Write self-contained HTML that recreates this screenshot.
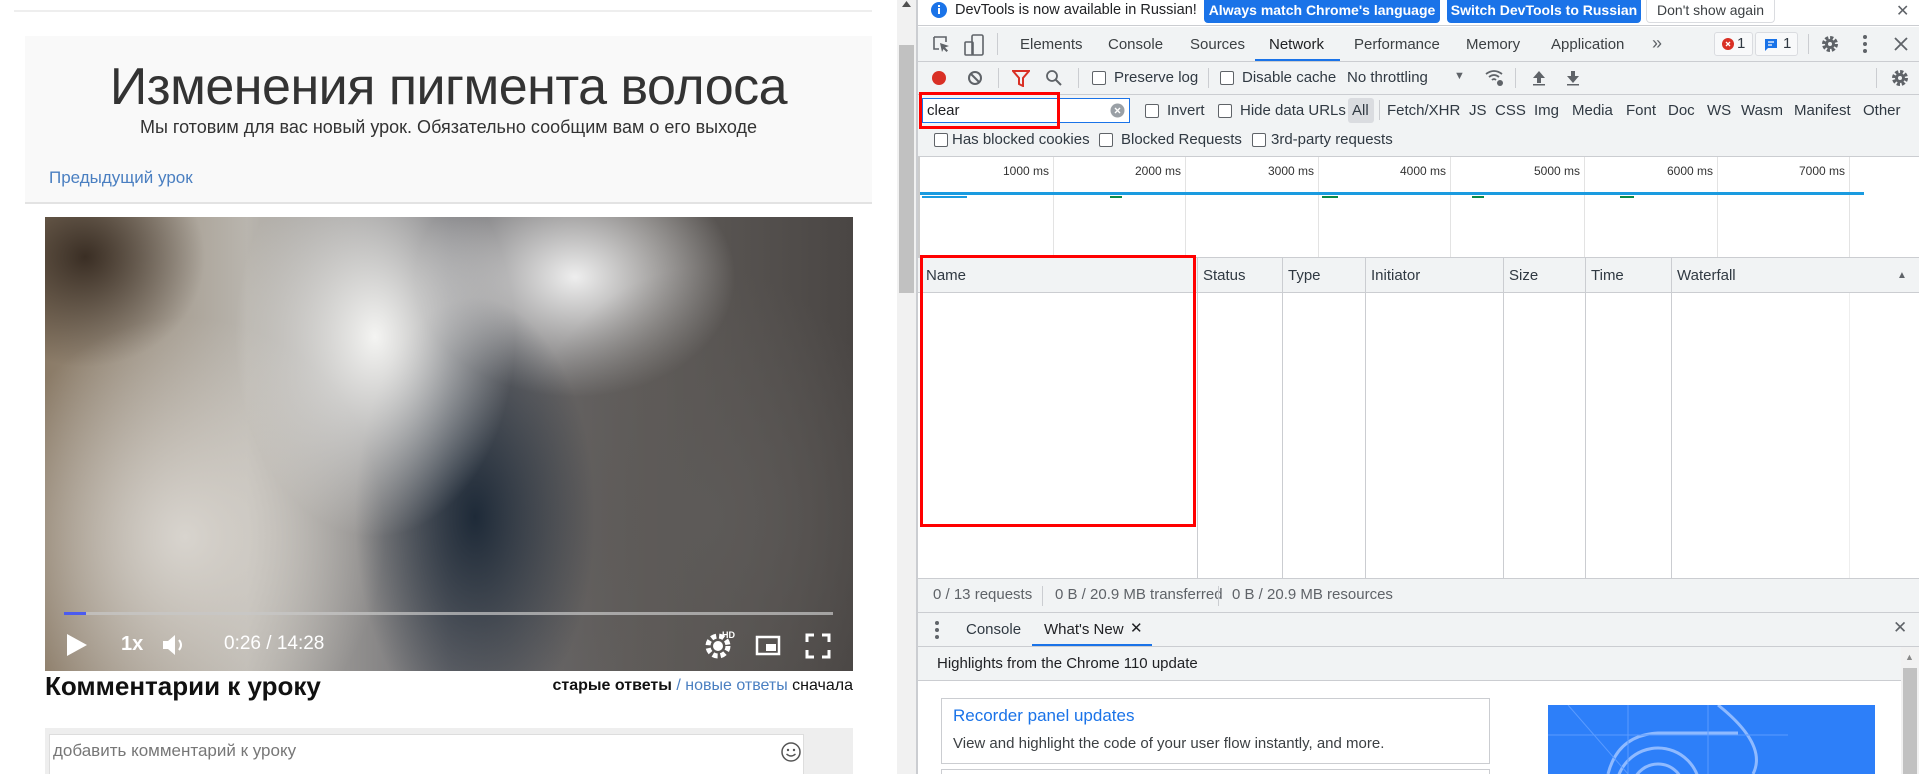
<!DOCTYPE html>
<html><head><meta charset="utf-8"><style>
*{box-sizing:border-box;margin:0;padding:0}
html,body{overflow:hidden}
body{width:1919px;height:774px;position:relative;background:#fff;font-family:"Liberation Sans",sans-serif;}
.a{position:absolute;white-space:nowrap}
.dt{font-size:14px;color:#303942}
.cb{position:absolute;width:14px;height:14px;border:1px solid #5f6368;border-radius:2px;background:#fff}
.vl{position:absolute;width:1px;background:#cbcdd1}
</style></head><body>
<!-- LEFT PAGE -->
<div class="a" style="left:14px;top:10px;width:858px;height:2px;background:#eee"></div>
<div class="a" style="left:25px;top:36px;width:847px;height:168px;background:#f9f9f9;border-bottom:2px solid #e3e3e3"></div>
<div class="a" style="left:25px;top:57px;width:847px;text-align:center;font-size:52px;color:#333;letter-spacing:-0.5px">Изменения пигмента волоса</div>
<div class="a" style="left:25px;top:117px;width:847px;text-align:center;font-size:18px;color:#333">Мы готовим для вас новый урок. Обязательно сообщим вам о его выходе</div>
<div class="a" style="left:49px;top:168px;font-size:17px;color:#4a7fc1">Предыдущий урок</div>
<div class="a" style="left:45px;top:217px;width:808px;height:454px;overflow:hidden;background:
radial-gradient(ellipse 140px 200px at 330px 120px,#f4f4f2 0%,rgba(240,240,240,0) 100%),
radial-gradient(ellipse 120px 220px at 430px 300px,#1e2a38 0%,rgba(30,40,55,0) 100%),
radial-gradient(ellipse 200px 250px at 660px 300px,#5d5a58 0%,rgba(90,88,85,0) 100%),
radial-gradient(ellipse 200px 220px at 140px 320px,#d8d4ce 0%,rgba(210,205,200,0) 100%),
radial-gradient(ellipse 160px 120px at 530px 60px,#eeeeee 0%,rgba(230,230,230,0) 100%),
radial-gradient(ellipse 120px 110px at 40px 40px,#3a2e24 0%,rgba(60,45,35,0) 100%),
linear-gradient(90deg,#8a7a66 0%,#b9b5ae 25%,#6e6e72 50%,#5f5b58 75%,#4a4644 100%)">
<div class="a" style="left:19px;top:395px;width:769px;height:3px;background:rgba(200,200,200,.7)"></div>
<div class="a" style="left:19px;top:395px;width:22px;height:3px;background:#4b5bf0"></div>
<svg class="a" style="left:20px;top:415px" width="24" height="26"><path d="M2 2 L22 13 L2 24Z" fill="#fff"/></svg>
<div class="a" style="left:76px;top:416px;font-size:20px;font-weight:bold;color:#fff">1x</div>
<svg class="a" style="left:116px;top:416px" width="28" height="24"><path d="M2 8h5l7-6v20l-7-6H2z" fill="#fff"/><path d="M18 7q4 5 0 10" stroke="#fff" stroke-width="2" fill="none"/></svg>
<div class="a" style="left:179px;top:416px;font-size:19px;color:#fff">0:26 / 14:28</div>
<svg class="a" style="left:659px;top:412px" width="34" height="30"><circle cx="14" cy="17" r="10" fill="none" stroke="#fff" stroke-width="5" stroke-dasharray="5 3"/><circle cx="14" cy="17" r="5" fill="#fff"/><text x="18" y="9" font-size="9" font-weight="bold" fill="#fff" font-family="Liberation Sans">HD</text></svg>
<svg class="a" style="left:710px;top:418px" width="26" height="22"><rect x="2" y="2" width="22" height="17" fill="none" stroke="#fff" stroke-width="2.5"/><rect x="11" y="9" width="10" height="7" fill="#fff"/></svg>
<svg class="a" style="left:760px;top:416px" width="26" height="26"><path d="M2 9V2h7M17 2h7v7M24 17v7h-7M9 24H2v-7" stroke="#fff" stroke-width="3" fill="none"/></svg>
</div>
<div class="a" style="left:45px;top:671px;font-size:26px;font-weight:bold;color:#111">Комментарии к уроку</div>
<div class="a" style="left:453px;top:677px;width:400px;text-align:right;font-size:16px;color:#111"><b>старые ответы</b> <span style="color:#4a7fc1">/ новые ответы</span> сначала</div>
<div class="a" style="left:45px;top:728px;width:808px;height:46px;background:#eee"></div>
<div class="a" style="left:49px;top:734px;width:755px;height:40px;background:#fff;border:1px solid #ddd;border-bottom:none"></div>
<div class="a" style="left:53px;top:741px;font-size:17px;color:#777">добавить комментарий к уроку</div>
<svg class="a" style="left:780px;top:741px" width="22" height="22"><circle cx="11" cy="11" r="9" fill="none" stroke="#555" stroke-width="1.5"/><circle cx="8" cy="9" r="1.2" fill="#555"/><circle cx="14" cy="9" r="1.2" fill="#555"/><path d="M6.5 13q4.5 4 9 0" stroke="#555" stroke-width="1.5" fill="none"/></svg>
<!-- scrollbar -->
<div class="a" style="left:897px;top:0;width:19px;height:774px;background:#f1f1f1"></div>
<div class="a" style="left:899px;top:45px;width:15px;height:248px;background:#c1c1c1"></div>
<svg class="a" style="left:901px;top:0" width="11" height="8"><path d="M1 7L5.5 1 10 7Z" fill="#505050"/></svg>
<div class="a" style="left:916px;top:0;width:2px;height:774px;background:#cbcdd1"></div>

<!-- DEVTOOLS -->
<div class="a dt" style="left:918px;top:0;width:1001px;height:774px;background:#fff"></div>
<div class="a" style="left:918px;top:0;width:1001px;height:26px;background:#fff;border-bottom:1px solid #cbcdd1"></div>
<svg class="a" style="left:930px;top:1px" width="18" height="18"><circle cx="9" cy="9" r="8" fill="#1a73e8"/><rect x="8" y="7" width="2" height="6" fill="#fff"/><rect x="8" y="4" width="2" height="2" fill="#fff"/></svg>
<div class="a dt" style="left:955px;top:2px;font-size:14.5px;color:#202124">DevTools is now available in Russian!</div>
<div class="a" style="left:1204px;top:0;width:236px;height:23px;background:#1a73e8;border-radius:0 0 4px 4px;color:#fff;font-weight:bold;font-size:14px;text-align:center;line-height:20px">Always match Chrome's language</div>
<div class="a" style="left:1447px;top:0;width:194px;height:23px;background:#1a73e8;border-radius:0 0 4px 4px;color:#fff;font-weight:bold;font-size:14px;text-align:center;line-height:20px">Switch DevTools to Russian</div>
<div class="a" style="left:1646px;top:0;width:129px;height:23px;border:1px solid #dadce0;border-top:none;border-radius:0 0 4px 4px;color:#3c4043;font-size:14px;text-align:center;line-height:20px">Don't show again</div>
<div class="a" style="left:1896px;top:1px;font-size:16px;color:#5f6368">✕</div>
<div class="a" style="left:918px;top:27px;width:1001px;height:35px;background:#f1f3f4;border-bottom:1px solid #cbcdd1"></div>
<svg class="a" style="left:932px;top:35px" width="20" height="20"><path d="M2 2h12v5M2 2v12h5" stroke="#5f6368" stroke-width="1.6" fill="none"/><path d="M8 8l9 3-4 1.5 3 3-1.5 1.5-3-3L10 17z" fill="#5f6368"/></svg>
<svg class="a" style="left:963px;top:33px" width="22" height="24"><rect x="9" y="2" width="11" height="20" rx="1.5" fill="none" stroke="#5f6368" stroke-width="1.6"/><rect x="2" y="9" width="8" height="13" rx="1" fill="none" stroke="#5f6368" stroke-width="1.6"/></svg>
<div class="vl" style="left:997px;top:33px;height:22px"></div>
<div class="a dt" style="left:1020px;top:36px;font-size:15px;color:#3c4043">Elements</div>
<div class="a dt" style="left:1108px;top:36px;font-size:15px;color:#3c4043">Console</div>
<div class="a dt" style="left:1190px;top:36px;font-size:15px;color:#3c4043">Sources</div>
<div class="a dt" style="left:1269px;top:36px;font-size:15px;color:#202124">Network</div>
<div class="a" style="left:1255px;top:59px;width:85px;height:2px;background:#1a73e8"></div>
<div class="a dt" style="left:1354px;top:36px;font-size:15px;color:#3c4043">Performance</div>
<div class="a dt" style="left:1466px;top:36px;font-size:15px;color:#3c4043">Memory</div>
<div class="a dt" style="left:1551px;top:36px;font-size:15px;color:#3c4043">Application</div>
<div class="a dt" style="left:1652px;top:33px;font-size:18px;color:#5f6368">»</div>
<div class="a" style="left:1714px;top:32px;width:39px;height:24px;border:1px solid #dadce0;border-radius:3px;background:#f8f9fa"></div>
<svg class="a" style="left:1722px;top:38px" width="12" height="12"><circle cx="6" cy="6" r="6" fill="#d93025"/><path d="M4 4l4 4M8 4l-4 4" stroke="#fff" stroke-width="1.3"/></svg>
<div class="a dt" style="left:1737px;top:35px;font-size:15px">1</div>
<div class="a" style="left:1755px;top:32px;width:43px;height:24px;border:1px solid #dadce0;border-radius:3px;background:#f8f9fa"></div>
<svg class="a" style="left:1764px;top:38px" width="14" height="14"><path d="M1 1h12v9H4l-3 3z" fill="#1a73e8"/><path d="M4 4h6M4 7h4" stroke="#fff" stroke-width="1.2"/></svg>
<div class="a dt" style="left:1783px;top:35px;font-size:15px">1</div>
<div class="vl" style="left:1808px;top:34px;height:20px"></div>
<svg class="a" style="left:1821px;top:35px" width="18" height="18"><circle cx="9" cy="9" r="6" fill="none" stroke="#5f6368" stroke-width="4" stroke-dasharray="3 1.7"/><circle cx="9" cy="9" r="5" fill="#5f6368"/><circle cx="9" cy="9" r="2" fill="#f1f3f4"/></svg>
<svg class="a" style="left:1862px;top:34px" width="6" height="20"><circle cx="3" cy="3" r="2" fill="#5f6368"/><circle cx="3" cy="10" r="2" fill="#5f6368"/><circle cx="3" cy="17" r="2" fill="#5f6368"/></svg>
<svg class="a" style="left:1894px;top:37px" width="14" height="14"><path d="M1 1l12 12M13 1L1 13" stroke="#5f6368" stroke-width="1.8"/></svg>
<div class="a" style="left:918px;top:62px;width:1001px;height:33px;background:#f1f3f4;border-bottom:1px solid #cbcdd1"></div>
<svg class="a" style="left:931px;top:70px" width="16" height="16"><circle cx="8" cy="8" r="7" fill="#d93025"/></svg>
<svg class="a" style="left:967px;top:70px" width="16" height="16"><circle cx="8" cy="8" r="6" fill="none" stroke="#5f6368" stroke-width="2"/><path d="M4 4l8 8" stroke="#5f6368" stroke-width="2"/></svg>
<div class="vl" style="left:998px;top:68px;height:20px"></div>
<svg class="a" style="left:1012px;top:70px" width="18" height="17"><path d="M1 1h16l-6 7v8l-4-2V8z" fill="none" stroke="#d93025" stroke-width="2"/></svg>
<svg class="a" style="left:1045px;top:69px" width="18" height="18"><circle cx="7" cy="7" r="5" fill="none" stroke="#5f6368" stroke-width="1.8"/><path d="M11 11l5 5" stroke="#5f6368" stroke-width="2"/></svg>
<div class="vl" style="left:1078px;top:68px;height:20px"></div>
<div class="cb" style="left:1092px;top:71px"></div>
<div class="a dt" style="left:1114px;top:69px;font-size:15px">Preserve log</div>
<div class="vl" style="left:1208px;top:68px;height:20px"></div>
<div class="cb" style="left:1220px;top:71px"></div>
<div class="a dt" style="left:1242px;top:69px;font-size:15px">Disable cache</div>
<div class="a dt" style="left:1347px;top:69px;font-size:15px">No throttling</div>
<div class="a dt" style="left:1454px;top:70px;font-size:11px;color:#5f6368">▼</div>
<svg class="a" style="left:1484px;top:68px" width="22" height="20"><path d="M2 6q8-6 16 0M5 9q5-4 10 0M8 12q2-2 4 0" stroke="#5f6368" stroke-width="1.8" fill="none"/><circle cx="16" cy="15" r="3" fill="#5f6368"/></svg>
<div class="vl" style="left:1515px;top:68px;height:20px"></div>
<svg class="a" style="left:1531px;top:69px" width="16" height="18"><path d="M8 2L2 9h4v5h4V9h4z" fill="#5f6368"/><rect x="2" y="15" width="12" height="1.5" fill="#5f6368"/></svg>
<svg class="a" style="left:1565px;top:69px" width="16" height="18"><path d="M8 14L2 7h4V2h4v5h4z" fill="#5f6368"/><rect x="2" y="15" width="12" height="1.5" fill="#5f6368"/></svg>
<div class="vl" style="left:1876px;top:68px;height:20px"></div>
<svg class="a" style="left:1891px;top:69px" width="18" height="18"><circle cx="9" cy="9" r="6" fill="none" stroke="#5f6368" stroke-width="4" stroke-dasharray="3 1.7"/><circle cx="9" cy="9" r="5" fill="#5f6368"/><circle cx="9" cy="9" r="2" fill="#f1f3f4"/></svg>
<div class="a" style="left:918px;top:95px;width:1001px;height:62px;background:#f1f3f4;border-bottom:1px solid #cbcdd1"></div>
<div class="a" style="left:922px;top:98px;width:208px;height:25px;background:#fff;border:1px solid #1a73e8"></div>
<div class="a dt" style="left:927px;top:102px;font-size:15px;color:#202124">clear</div>
<svg class="a" style="left:1110px;top:103px" width="15" height="15"><circle cx="7.5" cy="7.5" r="7" fill="#9aa0a6"/><path d="M5 5l5 5M10 5l-5 5" stroke="#fff" stroke-width="1.4"/></svg>
<div class="a" style="left:919px;top:92px;width:141px;height:37px;border:3px solid #f00"></div>
<div class="cb" style="left:1145px;top:104px"></div>
<div class="a dt" style="left:1167px;top:102px;font-size:15px">Invert</div>
<div class="cb" style="left:1218px;top:104px"></div>
<div class="a dt" style="left:1240px;top:102px;font-size:15px">Hide data URLs</div>
<div class="a" style="left:1348px;top:98px;width:26px;height:25px;background:#dadce0;border-radius:3px"></div>
<div class="a dt" style="left:1352px;top:102px;font-size:15px">All</div>
<div class="vl" style="left:1379px;top:100px;height:20px"></div>
<div class="a dt" style="left:1387px;top:102px;font-size:15px">Fetch/XHR</div>
<div class="a dt" style="left:1469px;top:102px;font-size:15px">JS</div>
<div class="a dt" style="left:1495px;top:102px;font-size:15px">CSS</div>
<div class="a dt" style="left:1534px;top:102px;font-size:15px">Img</div>
<div class="a dt" style="left:1572px;top:102px;font-size:15px">Media</div>
<div class="a dt" style="left:1626px;top:102px;font-size:15px">Font</div>
<div class="a dt" style="left:1668px;top:102px;font-size:15px">Doc</div>
<div class="a dt" style="left:1707px;top:102px;font-size:15px">WS</div>
<div class="a dt" style="left:1741px;top:102px;font-size:15px">Wasm</div>
<div class="a dt" style="left:1794px;top:102px;font-size:15px">Manifest</div>
<div class="a dt" style="left:1863px;top:102px;font-size:15px">Other</div>
<div class="cb" style="left:934px;top:133px"></div>
<div class="a dt" style="left:952px;top:131px;font-size:15px">Has blocked cookies</div>
<div class="cb" style="left:1099px;top:133px"></div>
<div class="a dt" style="left:1121px;top:131px;font-size:15px">Blocked Requests</div>
<div class="cb" style="left:1252px;top:133px"></div>
<div class="a dt" style="left:1271px;top:131px;font-size:15px">3rd-party requests</div>
<div class="a" style="left:918px;top:157px;width:2px;height:100px;background:#ccc"></div>
<div class="vl" style="left:1053px;top:157px;height:100px;background:#e3e3e3"></div>
<div class="vl" style="left:1185px;top:157px;height:100px;background:#e3e3e3"></div>
<div class="vl" style="left:1318px;top:157px;height:100px;background:#e3e3e3"></div>
<div class="vl" style="left:1450px;top:157px;height:100px;background:#e3e3e3"></div>
<div class="vl" style="left:1584px;top:157px;height:100px;background:#e3e3e3"></div>
<div class="vl" style="left:1717px;top:157px;height:100px;background:#e3e3e3"></div>
<div class="vl" style="left:1849px;top:157px;height:100px;background:#e3e3e3"></div>
<div class="a" style="left:966px;top:164px;width:83px;text-align:right;font-size:12px;color:#333">1000 ms</div>
<div class="a" style="left:1098px;top:164px;width:83px;text-align:right;font-size:12px;color:#333">2000 ms</div>
<div class="a" style="left:1231px;top:164px;width:83px;text-align:right;font-size:12px;color:#333">3000 ms</div>
<div class="a" style="left:1363px;top:164px;width:83px;text-align:right;font-size:12px;color:#333">4000 ms</div>
<div class="a" style="left:1497px;top:164px;width:83px;text-align:right;font-size:12px;color:#333">5000 ms</div>
<div class="a" style="left:1630px;top:164px;width:83px;text-align:right;font-size:12px;color:#333">6000 ms</div>
<div class="a" style="left:1762px;top:164px;width:83px;text-align:right;font-size:12px;color:#333">7000 ms</div>
<div class="a" style="left:920px;top:192px;width:944px;height:3px;background:#1a9be0"></div>
<div class="a" style="left:922px;top:196px;width:45px;height:2px;background:#1a9be0"></div>
<div class="a" style="left:1110px;top:196px;width:12px;height:2px;background:#0a8a4a"></div>
<div class="a" style="left:1322px;top:196px;width:16px;height:2px;background:#0a8a4a"></div>
<div class="a" style="left:1472px;top:196px;width:12px;height:2px;background:#0a8a4a"></div>
<div class="a" style="left:1620px;top:196px;width:14px;height:2px;background:#0a8a4a"></div>
<div class="a" style="left:918px;top:257px;width:1001px;height:36px;background:#f1f3f4;border-top:1px solid #cbcdd1;border-bottom:1px solid #cbcdd1"></div>
<div class="vl" style="left:1197px;top:258px;height:320px"></div>
<div class="vl" style="left:1282px;top:258px;height:320px"></div>
<div class="vl" style="left:1365px;top:258px;height:320px"></div>
<div class="vl" style="left:1503px;top:258px;height:320px"></div>
<div class="vl" style="left:1585px;top:258px;height:320px"></div>
<div class="vl" style="left:1671px;top:258px;height:320px"></div>
<div class="vl" style="left:1849px;top:293px;height:285px;background:#eee"></div>
<div class="a dt" style="left:926px;top:267px;font-size:15px">Name</div>
<div class="a dt" style="left:1203px;top:267px;font-size:15px">Status</div>
<div class="a dt" style="left:1288px;top:267px;font-size:15px">Type</div>
<div class="a dt" style="left:1371px;top:267px;font-size:15px">Initiator</div>
<div class="a dt" style="left:1509px;top:267px;font-size:15px">Size</div>
<div class="a dt" style="left:1591px;top:267px;font-size:15px">Time</div>
<div class="a dt" style="left:1677px;top:267px;font-size:15px">Waterfall</div>
<div class="a" style="left:1897px;top:270px;font-size:10px;color:#5f6368">▲</div>
<div class="a" style="left:920px;top:255px;width:276px;height:272px;border:3px solid #f00"></div>
<div class="a" style="left:918px;top:578px;width:1001px;height:35px;background:#f1f3f4;border-top:1px solid #cbcdd1;border-bottom:1px solid #cbcdd1"></div>
<div class="a dt" style="left:933px;top:586px;font-size:15px;color:#5f6368">0 / 13 requests</div>
<div class="vl" style="left:1042px;top:586px;height:20px"></div>
<div class="a dt" style="left:1055px;top:586px;font-size:15px;color:#5f6368">0 B / 20.9 MB transferred</div>
<div class="vl" style="left:1218px;top:586px;height:20px"></div>
<div class="a dt" style="left:1232px;top:586px;font-size:15px;color:#5f6368">0 B / 20.9 MB resources</div>
<div class="a" style="left:918px;top:613px;width:1001px;height:34px;background:#f1f3f4;border-bottom:1px solid #cbcdd1"></div>
<svg class="a" style="left:934px;top:620px" width="6" height="20"><circle cx="3" cy="3" r="2" fill="#5f6368"/><circle cx="3" cy="10" r="2" fill="#5f6368"/><circle cx="3" cy="17" r="2" fill="#5f6368"/></svg>
<div class="a dt" style="left:966px;top:621px;font-size:15px">Console</div>
<div class="a dt" style="left:1044px;top:621px;font-size:15px;color:#202124">What's New</div>
<div class="a" style="left:1130px;top:619px;font-size:15px;color:#202124">✕</div>
<div class="a" style="left:1032px;top:644px;width:120px;height:2px;background:#1a73e8"></div>
<div class="a" style="left:1893px;top:618px;font-size:17px;color:#5f6368">✕</div>
<div class="a" style="left:918px;top:647px;width:983px;height:34px;background:#f1f3f4;border-bottom:1px solid #cbcdd1"></div>
<div class="a dt" style="left:937px;top:655px;font-size:15px;color:#202124">Highlights from the Chrome 110 update</div>
<div class="a" style="left:1901px;top:647px;width:18px;height:127px;background:#f1f1f1"></div>
<div class="a" style="left:1903px;top:668px;width:14px;height:106px;background:#c1c1c1"></div>
<div class="a" style="left:1905px;top:652px;font-size:9px;color:#888">▲</div>
<div class="a" style="left:941px;top:698px;width:549px;height:66px;border:1px solid #cbcdd1"></div>
<div class="a" style="left:953px;top:706px;font-size:17px;color:#1a73e8">Recorder panel updates</div>
<div class="a" style="left:953px;top:735px;font-size:15px;color:#3c4043">View and highlight the code of your user flow instantly, and more.</div>
<div class="a" style="left:941px;top:769px;width:549px;height:5px;border:1px solid #cbcdd1;border-bottom:none"></div>
<div class="a" style="left:1548px;top:705px;width:327px;height:69px;background:#2d7ff9;overflow:hidden">
<svg width="327" height="69"><g stroke="#8fbaff" fill="none" stroke-width="3"><path d="M60 69 Q70 30 110 28 H190"/><circle cx="110" cy="85" r="42"/><circle cx="110" cy="85" r="26"/><path d="M170 0 Q220 40 205 69"/></g><g stroke="#5a9bff" stroke-width="1" fill="none"><path d="M80 0v69M160 0v69M0 30h240M20 0l60 69"/></g></svg>
</div>
</body></html>
